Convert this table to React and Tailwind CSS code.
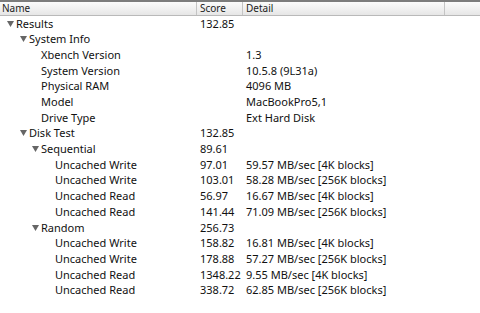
import React from 'react'

const rows = [
  { level: 0, name: 'Results', score: '132.85', open: true },
  { level: 1, name: 'System Info', open: true },
  { level: 2, name: 'Xbench Version', detail: '1.3' },
  { level: 2, name: 'System Version', detail: '10.5.8 (9L31a)' },
  { level: 2, name: 'Physical RAM', detail: '4096 MB' },
  { level: 2, name: 'Model', detail: 'MacBookPro5,1' },
  { level: 2, name: 'Drive Type', detail: 'Ext Hard Disk' },
  { level: 1, name: 'Disk Test', score: '132.85', open: true },
  { level: 2, name: 'Sequential', score: '89.61', open: true },
  { level: 3, name: 'Uncached Write', score: '97.01', detail: '59.57 MB/sec [4K blocks]' },
  { level: 3, name: 'Uncached Write', score: '103.01', detail: '58.28 MB/sec [256K blocks]' },
  { level: 3, name: 'Uncached Read', score: '56.97', detail: '16.67 MB/sec [4K blocks]' },
  { level: 3, name: 'Uncached Read', score: '141.44', detail: '71.09 MB/sec [256K blocks]' },
  { level: 2, name: 'Random', score: '256.73', open: true },
  { level: 3, name: 'Uncached Write', score: '158.82', detail: '16.81 MB/sec [4K blocks]' },
  { level: 3, name: 'Uncached Write', score: '178.88', detail: '57.27 MB/sec [256K blocks]' },
  { level: 3, name: 'Uncached Read', score: '1348.22', detail: '9.55 MB/sec [4K blocks]' },
  { level: 3, name: 'Uncached Read', score: '338.72', detail: '62.85 MB/sec [256K blocks]' },
]

const INDENT = ['pl-[16px]', 'pl-[29px]', 'pl-[41px]', 'pl-[55px]']

const Disclosure = () => (
  <svg width="7" height="6" viewBox="0 0 7 6" className="absolute -left-[9px] top-[5px]">
    <path d="M0 0 L7 0 L3.5 6 Z" fill="#666" />
  </svg>
)

export default function App() {
  return (
    <div className="w-[480px] h-[313px] bg-white overflow-hidden text-[#111]" style={{ fontFamily: '"Noto Sans", "DejaVu Sans", sans-serif' }}>
      {/* header */}
      <div className="flex h-[16px] border-t-2 border-[#7c7c7c] border-b border-b-[#b9b9b9] bg-gradient-to-b from-[#fbfbfb] to-[#e6e6e6] text-[10px] leading-[12px] text-[#222]">
        <div className="w-[197px] pl-[2px] border-r border-[#c4c4c4]">Name</div>
        <div className="w-[46px] pl-[3px] border-r border-[#c4c4c4]">Score</div>
        <div className="w-[202px] pl-[3px] border-r border-[#c4c4c4]">Detail</div>
        <div className="flex-1" />
      </div>

      {/* rows */}
      <div className="text-[11px]">
        {rows.map((r, i) => (
          <div key={i} className="flex h-[15.7px] items-center whitespace-nowrap">
            <div className={`w-[197px] ${INDENT[r.level]}`}>
              <span className="relative">
                {r.open && <Disclosure />}
                {r.name}
              </span>
            </div>
            <div className="w-[46px] pl-[3px]">{r.score}</div>
            <div className="pl-[3px]">{r.detail}</div>
          </div>
        ))}
      </div>
    </div>
  )
}
